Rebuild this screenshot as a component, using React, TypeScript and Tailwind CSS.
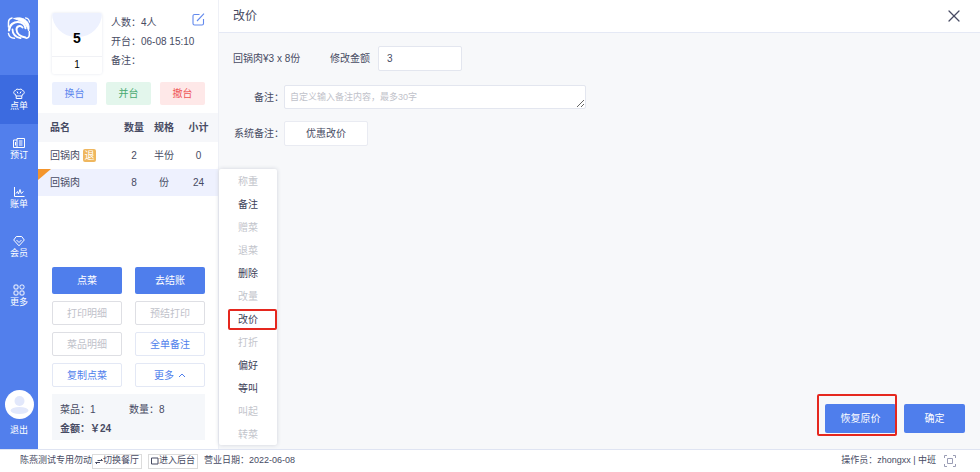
import type { ReactNode } from "react";
import { X } from "lucide-react";

const navItems: { label: string; active?: boolean; icon: ReactNode }[] = [
  {
    label: "点单",
    active: true,
    icon: (
      <>
        <path d="M3 8 2.500 6.300C.3 6.300 0 3 2.300 2.700 3 .8 5 .8 6 1.700 7 .8 9 .8 9.700 2.700 12 3 11.700 6.300 9.500 6.300L9 8zM3.200 8v2.500h5.600V8" />
        <path d="M4 3.500 5 5.500M8 3.500 7 5.500" />
      </>
    ),
  },
  {
    label: "预订",
    icon: <path d="M4 1.500h7.500v9H4zM4 3H.5v7.500H4M6 4h3.500M6 6h3.500M6 8h3.500M2.500 5v3.500" />,
  },
  {
    label: "账单",
    icon: <path d="M1.500 1v9.500H11.500M3 7.500l1.500-2L5.500 8 7 3.500 8.200 7.500 10.500 5.500" />,
  },
  {
    label: "会员",
    icon: (
      <>
        <path d="M3.300 1.500h5.400L11.300 5 6 10.800.7 5z" />
        <path d="M3.500 5 6 7.500 8.500 5" />
      </>
    ),
  },
  {
    label: "更多",
    icon: (
      <>
        <rect x="1" y="1" width="4" height="4" rx="1" />
        <rect x="7" y="1" width="4" height="4" rx="1.500" />
        <rect x="1" y="7" width="4" height="4" rx="1" />
        <rect x="7" y="7" width="4" height="4" rx="1" />
      </>
    ),
  },
];

const rows = [
  { name: "回锅肉", returned: true, qty: 2, unit: "半份", total: 0 },
  { name: "回锅肉", selected: true, qty: 8, unit: "份", total: 24 },
];

const menuItems = [
  { label: "称重", disabled: true },
  { label: "备注" },
  { label: "赠菜", disabled: true },
  { label: "退菜", disabled: true },
  { label: "删除" },
  { label: "改量", disabled: true },
  { label: "改价", marked: true },
  { label: "打折", disabled: true },
  { label: "偏好" },
  { label: "等叫" },
  { label: "叫起", disabled: true },
  { label: "转菜", disabled: true },
];

function Sidebar() {
  return (
    <nav className="flex w-[38px] shrink-0 flex-col items-center bg-[#527fec] text-[9px] text-white">
      <div className="flex h-[75px] w-full justify-center pt-4">
        <svg className="h-6 w-6" viewBox="0 0 24 24" fill="none" stroke="#fff" strokeLinecap="round" aria-label="标志">
          <path d="M1.500 11V6.500C1.500 4 2.500 2.500 5 2" strokeWidth="1.500" />
          <path d="M7 2.500C13 .8 19 2.500 21.300 7.500 22.300 10 22.300 12.500 21.500 15 20.500 9.500 16.500 5.500 7 2.500z" fill="#fff" strokeWidth="1" />
          <path d="M18.500 1.800c2.200.3 3.700 1.700 4 4.200" strokeWidth="1.300" />
          <path d="M2 14.500C2.500 8.500 7 5.800 11 6c4 .2 7 2.800 7.500 6.200" strokeWidth="2.200" />
          <path d="M15.500 11.500C13.500 9 9.500 10 9.500 13.500c0 4 4 7 9 8" strokeWidth="2" />
          <path d="M5.500 13.500c0 4 3 7.500 8 8.700" strokeWidth="1.800" />
          <path d="M1.500 17.500c.5 3 2.500 4.700 6 4.700" strokeWidth="1.500" />
          <path d="M22.300 15.500v3.500c0 2-1 3-3 3.300" strokeWidth="1.500" />
        </svg>
      </div>
      {navItems.map((item) => (
        <a
          key={item.label}
          href="#"
          className={
            "flex h-[49px] w-full flex-col items-center justify-center pt-px leading-[13px] " +
            (item.active ? "bg-[#3c6be0]" : "")
          }
        >
          <svg className="h-3 w-3" viewBox="0 0 12 12" fill="none" stroke="#fff" strokeWidth="1">
            {item.icon}
          </svg>
          {item.label}
        </a>
      ))}
      <button type="button" className="mt-auto mb-3 flex flex-col items-center gap-[5px] leading-[13px]">
        <svg className="h-[29px] w-[29px]" viewBox="0 0 29 29">
          <circle cx="14.500" cy="14.500" r="14.500" fill="#fff" />
          <circle cx="14.500" cy="11" r="5" fill="#e2e8fb" />
          <ellipse cx="14.500" cy="20.500" rx="9" ry="3.500" fill="#e2e8fb" />
        </svg>
        退出
      </button>
    </nav>
  );
}

function OrderPanel() {
  return (
    <section className="flex w-[181px] shrink-0 flex-col border-r border-[#eef0f6] bg-white">
      <div className="flex gap-[9px] pt-[13px] pr-[13px] pl-[14px]">
        <div className="flex h-[61px] w-[50px] shrink-0 flex-col overflow-hidden rounded-xs text-center text-black shadow-[0_0_3px_#e3e6ee]">
          <div className="relative flex h-11 justify-center border-b border-[#f0f1f5]">
            <div className="h-6 w-[50px] rounded-b-full bg-[#edf1fe]" />
            <b className="absolute inset-x-0 top-4 text-sm leading-[18px]">5</b>
          </div>
          <span className="text-[10px] leading-4">1</span>
        </div>
        <div className="flex-1 leading-[19px]">
          <div className="flex justify-between">
            <p>人数：4人</p>
            <button type="button" aria-label="编辑" className="h-[13px] w-[13px]">
              <svg viewBox="0 0 13 13" fill="none" stroke="#6289ed" strokeWidth="1.100">
                <path d="M7.500 1.500H2.500a1.500 1.500 0 0 0-1.500 1.500v7.500A1.500 1.500 0 0 0 2.500 12H10a1.500 1.500 0 0 0 1.500-1.500V6M5 8l7-7.300" />
              </svg>
            </button>
          </div>
          <p>开台：06-08 15:10</p>
          <p>备注：</p>
        </div>
      </div>
      <div className="mt-2 grid grid-cols-3 gap-[9px] pr-[13px] pl-[14px] leading-[23px]">
        <button type="button" className="rounded-xs bg-[#ebf0fe] text-[#5a84ed]">换台</button>
        <button type="button" className="rounded-xs bg-[#e3f6ec] text-[#48aa70]">并台</button>
        <button type="button" className="rounded-xs bg-[#fee8e8] text-[#ee5656]">撤台</button>
      </div>
      <table className="mt-2 w-full table-fixed text-center">
        <colgroup>
          <col />
          <col className="w-[30px]" />
          <col className="w-[30px]" />
          <col className="w-[39px]" />
        </colgroup>
        <thead>
          <tr className="h-[29px] bg-[#f6f7fa]">
            <th className="pl-3 text-left">品名</th>
            <th>数量</th>
            <th>规格</th>
            <th>小计</th>
          </tr>
        </thead>
        <tbody>
          {rows.map((row) => (
            <tr key={row.unit} className={"h-[27px] " + (row.selected ? "bg-[#eef1fe]" : "")}>
              <td className="relative pl-3 text-left">
                {row.selected && (
                  <svg className="absolute top-0 left-0 h-[11px] w-[13px]" viewBox="0 0 13 11">
                    <path d="M0 0h13L0 11z" fill="#f4952c" />
                  </svg>
                )}
                <span className="flex items-center gap-[3px]">
                  {row.name}
                  {row.returned && (
                    <span className="h-[13px] w-[13px] rounded-xs bg-[#efb75f] text-center leading-[13px] text-white">退</span>
                  )}
                </span>
              </td>
              <td>{row.qty}</td>
              <td>{row.unit}</td>
              <td>{row.total}</td>
            </tr>
          ))}
        </tbody>
      </table>
      <div className="mt-auto grid grid-cols-2 gap-x-[13px] gap-y-[7px] pr-[13px] pl-[14px]">
        <button type="button" className="h-[27px] rounded-xs bg-[#4f7eec] text-white">点菜</button>
        <button type="button" className="h-[27px] rounded-xs bg-[#4f7eec] text-white">去结账</button>
        <button type="button" disabled className="h-6 rounded-xs border border-[#dedfe4] text-[#bfc2ca]">打印明细</button>
        <button type="button" disabled className="h-6 rounded-xs border border-[#dedfe4] text-[#bfc2ca]">预结打印</button>
        <button type="button" disabled className="h-6 rounded-xs border border-[#dedfe4] text-[#bfc2ca]">菜品明细</button>
        <button type="button" className="h-6 rounded-xs border border-[#e3e8f5] text-[#4f7eec]">全单备注</button>
        <button type="button" className="h-6 rounded-xs border border-[#e3e8f5] text-[#4f7eec]">复制点菜</button>
        <button type="button" className="flex h-6 items-center justify-center gap-1 rounded-xs border border-[#e3e8f5] text-[#4f7eec]">
          更多
          <svg className="h-2 w-2" viewBox="0 0 8 8" fill="none" stroke="currentColor">
            <path d="M1 6 4 3l3 3" />
          </svg>
        </button>
      </div>
      <div className="mt-[7px] mr-[13px] mb-[9px] ml-[14px] h-[46px] bg-[#f5f7fa] px-2 pt-[6px] leading-[19px]">
        <div className="flex">
          <span className="w-[69px]">菜品：1</span>
          <span>数量：8</span>
        </div>
        <b>金额：￥24</b>
      </div>
    </section>
  );
}

function ContextMenu() {
  return (
    <ul className="absolute top-[169px] left-0 w-[58px] rounded-xs bg-white shadow-[0_0_4px_#cfd2da]">
      {menuItems.map((item) => (
        <li key={item.label} className="relative">
          <button
            type="button"
            disabled={item.disabled}
            className="h-[23px] w-full pt-[2px] text-[#3c4058] disabled:text-[#c3c5cc]"
          >
            {item.label}
          </button>
          {item.marked && (
            <span className="pointer-events-none absolute top-[2px] right-0 left-[9px] h-[21px] rounded-xs border-2 border-[#e5271e]" />
          )}
        </li>
      ))}
    </ul>
  );
}

function PricePanel() {
  return (
    <main className="relative flex flex-1 flex-col bg-[#f7f8fa]">
      <header className="flex h-[33px] items-center justify-between border-b border-[#e5e9f5] bg-white pr-4 pl-[14px]">
        <h1 className="text-xs">改价</h1>
        <button type="button" aria-label="关闭">
          <X size={20} strokeWidth={1.500} />
        </button>
      </header>
      <form className="flex flex-1 flex-col pt-[13px] pr-[15px] pl-[14px]">
        <div className="flex items-center">
          <span className="w-[97px]">回锅肉¥3 x 8份</span>
          <label htmlFor="amount" className="w-12">修改金额</label>
          <input
            id="amount"
            defaultValue="3"
            className="h-[25px] w-[84px] rounded-xs border border-[#e3e6ef] bg-white px-2"
          />
        </div>
        <div className="mt-[14px] flex items-center">
          <label htmlFor="remark" className="w-[51px] text-right">备注：</label>
          <textarea
            id="remark"
            rows={1}
            placeholder="自定义输入备注内容，最多30字"
            className="h-6 w-[302px] resize rounded-xs border border-[#e3e6ef] bg-white px-[5px] py-1 text-[9px] leading-[14px] placeholder:text-[#bfc2ca]"
          />
        </div>
        <div className="mt-3 flex items-center">
          <span className="w-[51px] text-right">系统备注：</span>
          <button type="button" className="h-[25px] w-[84px] rounded-xs border border-[#e9ebf2] bg-white">
            优惠改价
          </button>
        </div>
        <div className="mt-auto mb-4 flex justify-end gap-2">
          <div className="relative">
            <button type="button" className="h-[29px] w-[71px] rounded-xs bg-[#4f7eec] text-white">
              恢复原价
            </button>
            <span className="pointer-events-none absolute -top-[10px] -right-px -bottom-[3px] -left-2 rounded-xs border-2 border-[#e5271e]" />
          </div>
          <button type="button" className="h-[29px] w-[61px] rounded-xs bg-[#4f7eec] text-white">
            确定
          </button>
        </div>
      </form>
      <ContextMenu />
    </main>
  );
}

function StatusBar() {
  return (
    <footer className="flex h-[23px] shrink-0 items-center border-t border-[#dfe4f2] bg-white pr-6 pl-5 text-[9px]">
      <span>陈燕测试专用勿动</span>
      <button type="button" className="flex h-[15px] items-center border border-[#dcdcdc] px-[2px]">
        <svg className="h-2 w-2" viewBox="0 0 8 8" fill="none" stroke="currentColor">
          <path d="M2.500 3.500H7.500L6 2M5 5.500H.5L2 7" />
        </svg>
        切换餐厅
      </button>
      <button type="button" className="ml-[6px] flex h-[15px] items-center border border-[#dcdcdc] px-[2px]">
        <svg className="h-2 w-2" viewBox="0 0 8 8" fill="none" stroke="currentColor">
          <path d="M.5 1h6.500v6H.5z" />
        </svg>
        进入后台
      </button>
      <span className="ml-[6px]">营业日期：2022-06-08</span>
      <span className="mr-2 ml-auto">操作员：zhongxx | 中班</span>
      <button type="button" aria-label="全屏" className="h-3 w-3">
        <svg viewBox="0 0 12 12" fill="none" stroke="#9a9db5">
          <path d="M3 .5H.5V3M9 .5h2.500V3M.5 9v2.500H3M11.500 9v2.500H9M3.500 3.500h5v5h-5z" />
        </svg>
      </button>
    </footer>
  );
}

export default function App() {
  return (
    <div className="flex h-screen flex-col overflow-hidden font-['Liberation_Sans','Noto_Sans_CJK_SC',sans-serif] text-[10px] text-[#474b63]">
      <div className="flex min-h-0 flex-1">
        <Sidebar />
        <OrderPanel />
        <PricePanel />
      </div>
      <StatusBar />
    </div>
  );
}
